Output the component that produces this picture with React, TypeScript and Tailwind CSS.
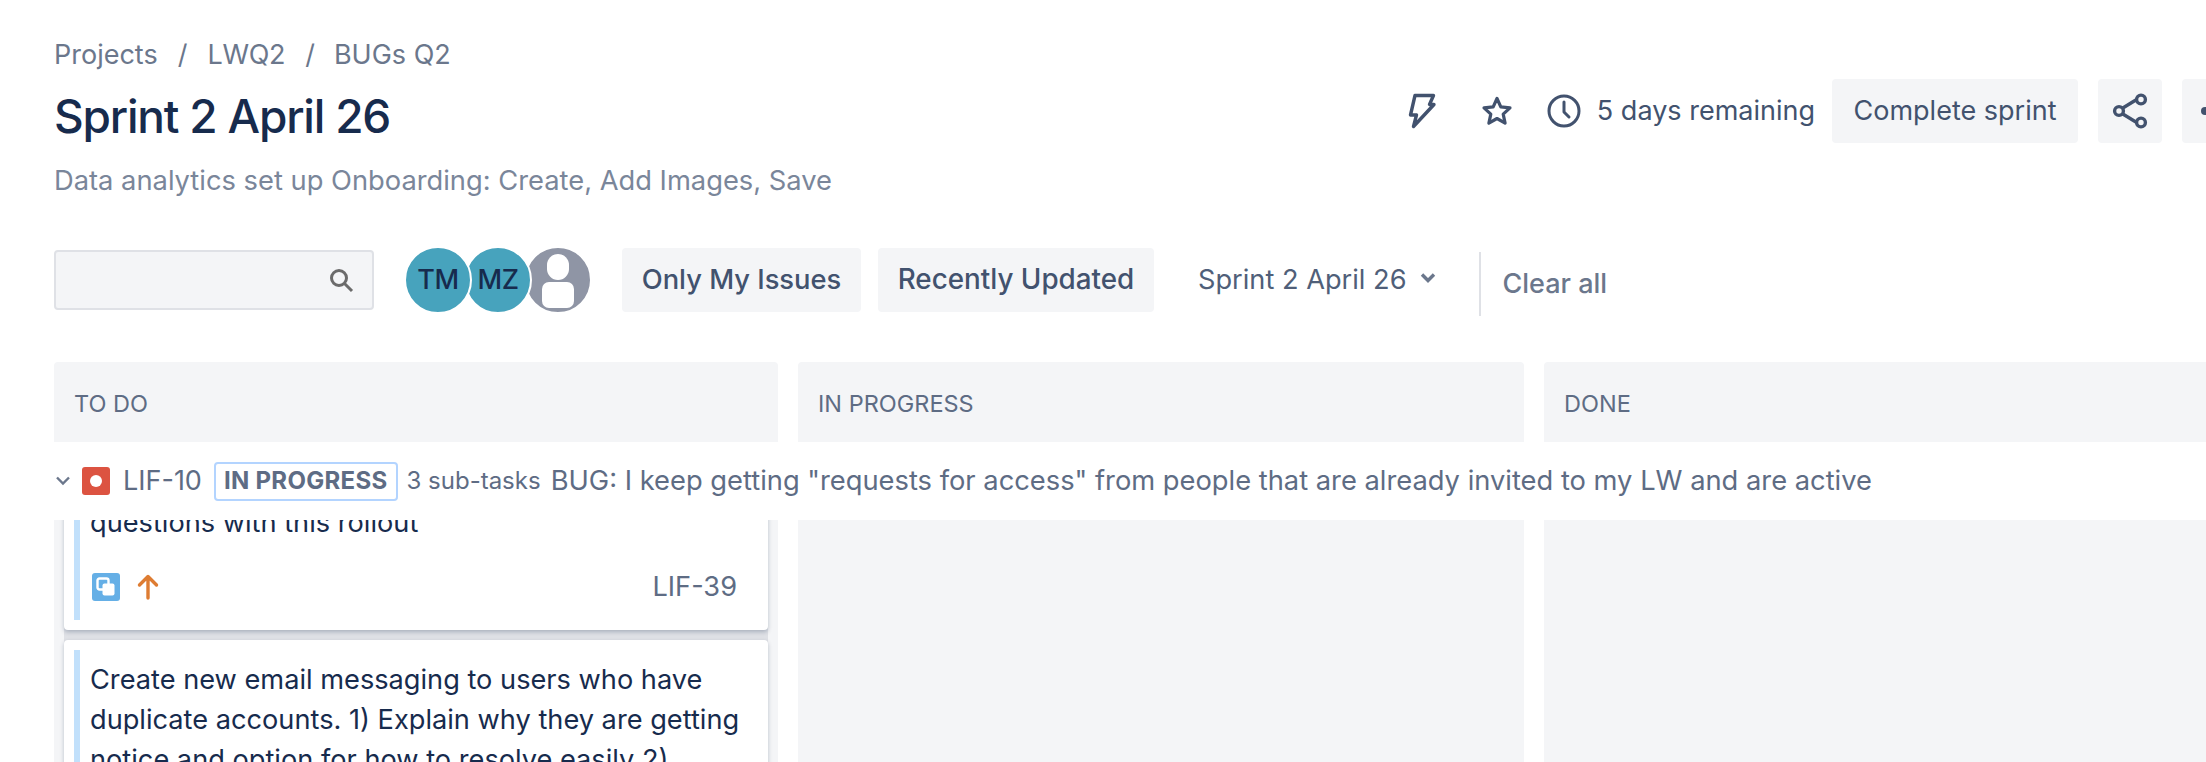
const FONT = "font-['Inter',sans-serif]";

function BoltIcon() {
  return (
    <svg width="28" height="36" viewBox="0 0 28 36" fill="none" stroke="#42526e" strokeWidth="3.4" strokeLinejoin="round" strokeLinecap="round">
      <path d="M7 2.5h18.5L21.5 11.5H26L5.5 33.5 8.5 22H2.5z" />
    </svg>
  );
}

function StarIcon() {
  return (
    <svg width="32" height="32" viewBox="0 0 32 32" fill="none" stroke="#42526e" strokeWidth="3.2" strokeLinejoin="round">
      <path d="M16 3.5l3.8 8.4 9.2 1-6.8 6.2 1.9 9-8.1-4.6-8.1 4.6 1.9-9L3 12.9l9.2-1z" />
    </svg>
  );
}

function ClockIcon() {
  return (
    <svg width="34" height="34" viewBox="0 0 34 34" fill="none" stroke="#42526e" strokeWidth="3" strokeLinecap="round" strokeLinejoin="round">
      <circle cx="17" cy="17" r="15" />
      <path d="M17 8v10l5 5" />
    </svg>
  );
}

function ShareIcon() {
  return (
    <svg width="36" height="36" viewBox="0 0 36 36" fill="none" stroke="#42526e" strokeWidth="3.4">
      <path d="M10 15.5L25.5 6M10 20.5L25.5 30" />
      <circle cx="7" cy="18" r="4.4" fill="#f4f5f7" />
      <circle cx="29" cy="6.5" r="4.4" fill="#f4f5f7" />
      <circle cx="29" cy="29.5" r="4.4" fill="#f4f5f7" />
    </svg>
  );
}

function SearchIcon() {
  return (
    <svg width="26" height="26" viewBox="0 0 26 26" fill="none" stroke="#6b6b6b" strokeWidth="3">
      <circle cx="11" cy="11" r="7.5" />
      <path d="M16.5 16.5L24 24" />
    </svg>
  );
}

function Avatar({ label, z }: { label: string; z: string }) {
  return (
    <div className={`relative ${z} -mr-[8px] flex h-[68px] w-[68px] items-center justify-center rounded-full border-2 border-white bg-[#47a3bd] text-[27px] font-medium tracking-[-0.5px] text-[#172b4d]`}>
      {label}
    </div>
  );
}

function Card({ lines, cut }: { lines: string[]; cut?: boolean }) {
  return (
    <div className={`mb-[10px] flex rounded-[4px] bg-white pb-[10px] pl-[10px] pr-[31px] shadow-[0_2px_4px_rgba(9,30,66,0.25)] ${cut ? "-mt-[17px] rounded-t-none" : "pt-[10px]"}`}>
      <div className="w-[6px] shrink-0 bg-[#c1e0fb]" />
      <div className={`ml-[10px] flex-1 text-[27.2px] leading-[40px] text-[#172b4d] ${cut ? "" : "pt-[10px]"}`}>
        {lines.map((l) => (
          <div key={l} className="whitespace-nowrap">{l}</div>
        ))}
        {cut && (
          <div className="mt-[24px] flex items-center pb-[13px] pl-[2px]">
            <div className="flex h-[28px] w-[28px] items-center justify-center rounded-[3px] bg-[#65afe6]">
              <svg width="20" height="20" viewBox="0 0 20 20">
                <rect x="1.5" y="1.5" width="11" height="11" rx="2" fill="none" stroke="#fff" strokeWidth="2.4" />
                <rect x="6.5" y="6.5" width="12" height="12" rx="2" fill="#fff" />
              </svg>
            </div>
            <svg className="ml-[17px]" width="22" height="26" viewBox="0 0 22 26" fill="none" stroke="#de7c32" strokeWidth="3.4" strokeLinecap="round" strokeLinejoin="round">
              <path d="M11 24V3M2.5 11L11 2.5 19.5 11" />
            </svg>
            <span className="ml-auto text-[#5e6c84]">LIF-39</span>
          </div>
        )}
      </div>
    </div>
  );
}

export default function App() {
  return (
    <div className={`${FONT} h-[762px] w-[2206px] overflow-hidden bg-white`}>
      <div className="w-[2300px] pl-[54px]">
        <div className="w-[2192px]">
          {/* header */}
          <div className="flex items-start justify-between pt-[39px]">
            <div>
              <div className="flex h-[32px] items-center text-[27px] leading-[32px] text-[#6b778c]">
                <span>Projects</span>
                <span className="mx-[20px]">/</span>
                <span className="tracking-[-0.3px]">LWQ2</span>
                <span className="ml-[20px] mr-[19px]">/</span>
                <span>BUGs Q2</span>
              </div>
              <h1 className="mt-[17px] text-[46px] font-medium leading-[56px] tracking-[-1.2px] text-[#172b4d]">Sprint 2 April 26</h1>
              <p className="mt-[21px] whitespace-nowrap text-[27.3px] leading-[32px] text-[#7a869a]">Data analytics set up Onboarding: Create, Add Images, Save</p>
            </div>
            <div className="mt-[40px] flex shrink-0 items-center">
              <BoltIcon />
              <span className="ml-[45px]"><StarIcon /></span>
              <span className="ml-[34px]"><ClockIcon /></span>
              <span className="ml-[16px] text-[27px] text-[#42526e]">5 days remaining</span>
              <button className="ml-[17px] h-[64px] w-[246px] rounded-[4px] bg-[#f4f5f7] text-[27px] text-[#42526e]">Complete sprint</button>
              <button className="ml-[20px] flex h-[64px] w-[64px] items-center justify-center rounded-[4px] bg-[#f4f5f7]"><ShareIcon /></button>
              <button className="ml-[20px] flex h-[64px] w-[64px] items-center gap-[6px] rounded-[4px] bg-[#f4f5f7] pl-[19px]">
                <span className="h-[8px] w-[8px] rounded-full bg-[#42526e]" />
                <span className="h-[8px] w-[8px] rounded-full bg-[#42526e]" />
                <span className="h-[8px] w-[8px] rounded-full bg-[#42526e]" />
              </button>
            </div>
          </div>

          {/* filters */}
          <div className="mt-[49px] flex h-[68px] items-center">
            <div className="flex h-[60px] w-[320px] items-center justify-end rounded-[4px] border-2 border-[#dfe1e6] bg-[#f4f5f7] pr-[18px]">
              <SearchIcon />
            </div>
            <div className="ml-[30px] flex items-center">
              <Avatar label="TM" z="z-30" />
              <Avatar label="MZ" z="z-20" />
              <div className="relative z-10 h-[68px] w-[68px] overflow-hidden rounded-full border-2 border-white bg-[#8f95a5]">
                <div className="mx-auto mt-[6px] h-[26px] w-[22px] rounded-full bg-white" />
                <div className="mx-auto mt-[2px] h-[26px] w-[32px] rounded-[7px] bg-white" />
              </div>
            </div>
            <button className="ml-[30px] h-[64px] w-[239px] rounded-[4px] bg-[#f4f5f7] text-[27.3px] font-medium text-[#42526e]">Only My Issues</button>
            <button className="ml-[17px] h-[64px] w-[276px] rounded-[4px] bg-[#f4f5f7] text-[27.8px] font-medium text-[#42526e]">Recently Updated</button>
            <span className="ml-[44px] text-[27.2px] text-[#505f79]">Sprint 2 April 26</span>
            <svg className="ml-[13px] mb-[4px]" width="16" height="12" viewBox="0 0 16 12" fill="none" stroke="#6b778c" strokeWidth="3.4">
              <path d="M2 2.5l6 6 6-6" />
            </svg>
            <div className="ml-[43px] mt-[8px] h-[64px] w-[2px] bg-[#dfe1e6]" />
            <span className="ml-[22px] mt-[8px] text-[27px] font-medium text-[#6b778c]">Clear all</span>
          </div>

          {/* column headers */}
          <div className="mt-[48px] flex gap-[20px]">
            {["TO DO", "IN PROGRESS", "DONE"].map((c, i) => (
              <div key={c} className={`flex h-[80px] shrink-0 items-center rounded-t-[4px] bg-[#f4f5f7] pl-[20px] pt-[3px] text-[23.5px] text-[#5e6c84] ${i === 0 ? "w-[724px]" : "w-[726px]"}`}>
                {c}
              </div>
            ))}
          </div>

          {/* swimlane header */}
          <div className="flex h-[78px] items-center pl-[2px]">
            <svg width="14" height="10" viewBox="0 0 14 10" fill="none" stroke="#6b778c" strokeWidth="2.4">
              <path d="M1 1.5l6 6 6-6" />
            </svg>
            <div className="ml-[12px] flex h-[28px] w-[28px] items-center justify-center rounded-[3px] bg-[#dc5341]">
              <span className="h-[12px] w-[12px] rounded-full bg-white" />
            </div>
            <span className="ml-[13px] text-[27px] text-[#5e6c84]">LIF-10</span>
            <span className="ml-[12px] flex h-[39px] items-center rounded-[4px] border-2 border-[#b3d4ff] px-[8px] text-[24px] font-bold tracking-[0.3px] text-[#5e6c84]">IN PROGRESS</span>
            <span className="ml-[9px] text-[24px] text-[#5e6c84]">3 sub-tasks</span>
            <span className="ml-[10px] whitespace-nowrap text-[27.3px] text-[#5e6c84]">BUG: I keep getting "requests for access" from people that are already invited to my LW and are active</span>
          </div>

          {/* columns */}
          <div className="flex h-[242px] gap-[20px] overflow-hidden">
            <div className="w-[724px] shrink-0 bg-[#f4f5f7] px-[10px]">
              <div className="bg-[#dfe1e6]">
                <Card cut lines={["questions with this rollout"]} />
                <Card lines={["Create new email messaging to users who have", "duplicate accounts. 1) Explain why they are getting", "notice and option for how to resolve easily 2)"]} />
              </div>
            </div>
            <div className="w-[726px] shrink-0 bg-[#f4f5f7]" />
            <div className="w-[726px] shrink-0 bg-[#f4f5f7]" />
          </div>
        </div>
      </div>
    </div>
  );
}
